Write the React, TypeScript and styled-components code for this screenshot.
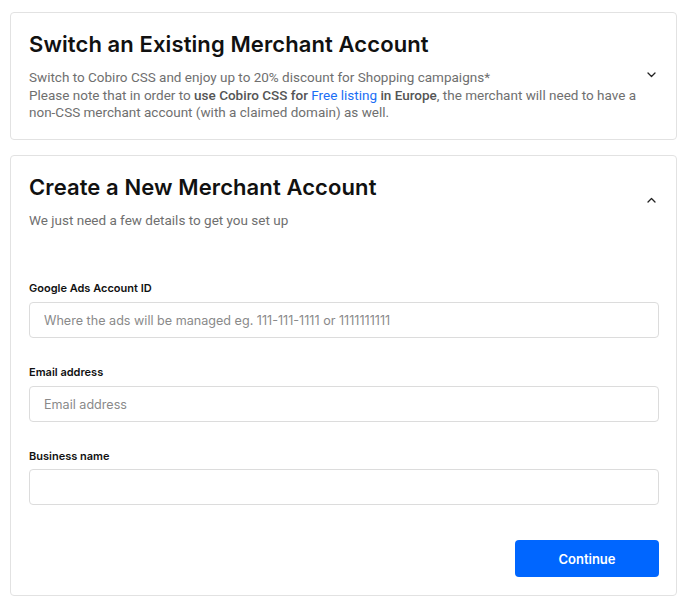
import styled, { createGlobalStyle } from "styled-components";

const GlobalStyle = createGlobalStyle`
  body {
    margin: 0;
    background: #ffffff;
    font-family: Roboto, "Liberation Sans", sans-serif;
  }
  * {
    box-sizing: border-box;
  }
`;

const Page = styled.div`
  width: 667px;
  margin: 12px 0 0 10px;
  display: flex;
  flex-direction: column;
  gap: 15px;
`;

const Card = styled.section`
  border: 1px solid #e2e2e2;
  border-radius: 4px;
  background: #fff;
  padding: 0 17px 0 18px;
`;

const Header = styled.div`
  display: flex;
  align-items: center;
  gap: 4px;
  padding: 16px 0 17px;
`;

const HeaderText = styled.div`
  flex: 1;
  display: flex;
  flex-direction: column;
  gap: 10px;
`;

const Title = styled.h2`
  margin: 0;
  font-family: Inter, "Open Sans", sans-serif;
  font-weight: 600;
  font-size: 22px;
  line-height: 30px;
  color: #111;
  letter-spacing: 0.1px;
`;

const Description = styled.p`
  margin: 0;
  font-size: 13.5px;
  line-height: 17.5px;
  color: #6f6f6f;
`;

const Strong = styled.b`
  font-weight: 500;
  color: #555;
`;

const Link = styled.a`
  color: #1a6ef5;
  text-decoration: none;
`;

const Toggle = styled.button`
  border: none;
  background: none;
  padding: 0;
  width: 16px;
  height: 16px;
  display: flex;
  align-items: center;
  justify-content: center;
  color: #222;
  cursor: pointer;
`;

const Form = styled.form`
  display: flex;
  flex-direction: column;
  padding: 33px 0 18px;
`;

const Field = styled.div<{ $gap?: number }>`
  display: flex;
  flex-direction: column;
  gap: ${({ $gap = 5 }) => $gap}px;
  margin-bottom: 25px;
`;

const Label = styled.label`
  font-family: Inter, "Open Sans", sans-serif;
  font-weight: 600;
  font-size: 11px;
  line-height: 18px;
  color: #111;
`;

const Input = styled.input`
  height: 36px;
  border: 1px solid #dcdcdc;
  border-radius: 4px;
  padding: 0 14px;
  font-family: Inter, "Open Sans", sans-serif;
  font-size: 12.6px;
  color: #222;
  outline: none;
  &::placeholder {
    color: #8a8a8a;
  }
`;

const Actions = styled.div`
  display: flex;
  justify-content: flex-end;
  margin-top: 10px;
`;

const Button = styled.button`
  width: 144px;
  height: 37px;
  border: none;
  border-radius: 4px;
  background: #0066ff;
  color: #fff;
  font-family: Inter, "Open Sans", sans-serif;
  font-weight: 600;
  font-size: 13px;
  cursor: pointer;
`;

const Chevron = ({ up }: { up?: boolean }) => (
  <svg width="9" height="6" viewBox="0 0 9 6" fill="none">
    <path
      d={up ? "M1 5l3.5-3.5L8 5" : "M1 1l3.5 3.5L8 1"}
      stroke="currentColor"
      strokeWidth="1.3"
      strokeLinecap="round"
      strokeLinejoin="round"
    />
  </svg>
);

const fields = [
  { id: "ads", label: "Google Ads Account ID", placeholder: "Where the ads will be managed eg. 111-111-1111 or 1111111111", gap: 5 },
  { id: "email", label: "Email address", placeholder: "Email address", gap: 5 },
  { id: "business", label: "Business name", placeholder: "", gap: 4 },
];

const App = () => (
  <>
    <GlobalStyle />
    <Page>
      <Card>
        <Header>
          <HeaderText>
            <Title>Switch an Existing Merchant Account</Title>
            <Description>
              Switch to Cobiro CSS and enjoy up to 20% discount for Shopping campaigns*
              <br />
              Please note that in order to <Strong>use Cobiro CSS for</Strong> <Link href="#">Free listing</Link>{" "}
              <Strong>in Europe</Strong>, the merchant will need to have a non-CSS merchant account (with a claimed
              domain) as well.
            </Description>
          </HeaderText>
          <Toggle type="button">
            <Chevron />
          </Toggle>
        </Header>
      </Card>
      <Card>
        <Header>
          <HeaderText>
            <Title>Create a New Merchant Account</Title>
            <Description>We just need a few details to get you set up</Description>
          </HeaderText>
          <Toggle type="button">
            <Chevron up />
          </Toggle>
        </Header>
        <Form onSubmit={(e) => e.preventDefault()}>
          {fields.map((f) => (
            <Field key={f.id} $gap={f.gap}>
              <Label htmlFor={f.id}>{f.label}</Label>
              <Input id={f.id} placeholder={f.placeholder} />
            </Field>
          ))}
          <Actions>
            <Button type="submit">Continue</Button>
          </Actions>
        </Form>
      </Card>
    </Page>
  </>
);

export default App;
